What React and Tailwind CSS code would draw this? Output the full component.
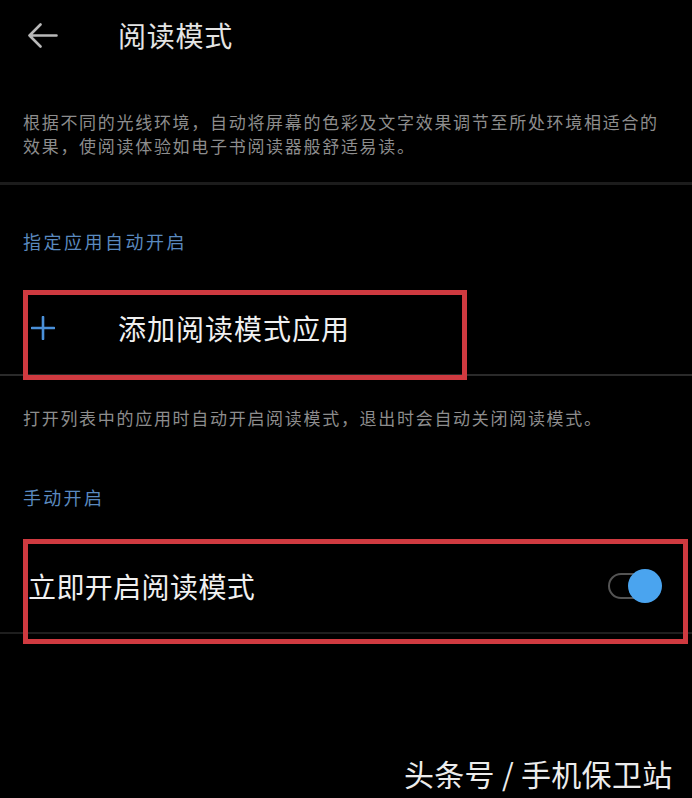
import React from "react";

const FONT = { fontFamily: '"Noto Sans CJK SC", "Noto Sans", sans-serif' };

function BackArrow() {
  return (
    <svg width="31" height="25" viewBox="0 0 31 25" fill="none">
      <path
        d="M2.5 12.5 H29.5 M13.5 1.5 L2.5 12.5 L13.5 23.5"
        stroke="#b9b9b9"
        strokeWidth="2.6"
        strokeLinecap="round"
        strokeLinejoin="round"
      />
    </svg>
  );
}

function PlusIcon() {
  return (
    <svg width="24" height="24" viewBox="0 0 24 24" fill="none">
      <path d="M12 1 V23 M1 12 H23" stroke="#4a90d9" strokeWidth="2.6" strokeLinecap="round" />
    </svg>
  );
}

function Toggle() {
  return (
    <div className="relative w-[54px] h-[34px]">
      <div className="absolute left-0 top-[4px] w-[42px] h-[26px] rounded-full border-2 border-[#545454]" />
      <div className="absolute right-0 top-0 w-[34px] h-[34px] rounded-full bg-[#4aa4ef]" />
    </div>
  );
}

export default function App() {
  return (
    <div className="relative w-[692px] h-[798px] bg-black overflow-hidden" style={FONT}>
      {/* header */}
      <div className="h-[70px] flex items-center pl-[27px]">
        <BackArrow />
        <span className="ml-[60px] text-[28px] leading-none tracking-[0.75px] text-[#e4e4e4]">
          阅读模式
        </span>
      </div>

      {/* intro */}
      <p className="pt-[40px] pb-[24px] pl-[23px] text-[17px] leading-[24px] tracking-[1.7px] text-[#8d8d8d]">
        根据不同的光线环境，自动将屏幕的色彩及文字效果调节至所处环境相适合的
        <br />
        效果，使阅读体验如电子书阅读器般舒适易读。
      </p>
      <div className="h-[3px] bg-[#1c1c1c]" />

      {/* auto-enable section */}
      <div className="mt-[44px] pl-[23px] text-[18px] leading-[24px] tracking-[2.5px] text-[#5a89bf]">
        指定应用自动开启
      </div>
      <div className="mt-[37px] h-[86px] pb-[9px] flex items-center border-b-2 border-[#2a2a2a]">
        <div className="ml-[31px] w-[24px] flex items-center">
          <PlusIcon />
        </div>
        <span className="ml-[63px] text-[28px] leading-none tracking-[1px] text-[#f0f0f0]">
          添加阅读模式应用
        </span>
      </div>
      <p className="mt-[30px] pl-[23px] text-[17px] leading-[24px] tracking-[1.7px] text-[#8d8d8d]">
        打开列表中的应用时自动开启阅读模式，退出时会自动关闭阅读模式。
      </p>

      {/* manual section */}
      <div className="mt-[55px] pl-[23px] text-[18px] leading-[24px] tracking-[2.3px] text-[#5a89bf]">
        手动开启
      </div>
      <div className="mt-[31px] h-[94px] flex items-center justify-between pl-[28px] pr-[30px] border-b-2 border-[#1e1e1e]">
        <span className="text-[28px] leading-none tracking-[0.4px] text-[#f0f0f0]">
          立即开启阅读模式
        </span>
        <Toggle />
      </div>

      {/* highlight frames */}
      <div className="absolute left-[23px] top-[290px] w-[444px] h-[90px] border-[5px] border-[#cf3a40]" />
      <div className="absolute left-[23px] top-[539px] w-[665px] h-[105px] border-[5px] border-[#cf3a40]" />

      {/* watermark */}
      <div className="absolute left-[404px] top-[753px] text-[30px] leading-[40px] tracking-[0.3px] text-[#ececec] [text-shadow:1px_1px_2px_rgba(0,0,0,0.9)]">
        头条号 / 手机保卫站
      </div>
    </div>
  );
}
